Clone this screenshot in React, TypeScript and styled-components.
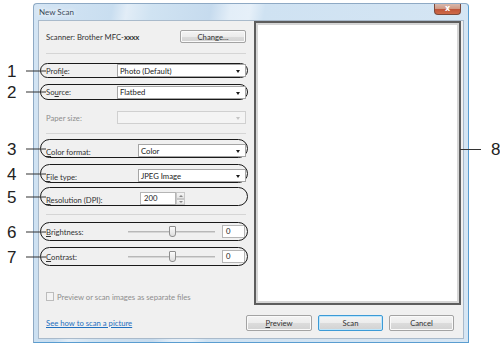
import React from 'react';
import styled, { createGlobalStyle } from 'styled-components';

const Global = createGlobalStyle`
  html, body { margin: 0; padding: 0; background: #fff; }
  body { font-family: Lato, "Open Sans", sans-serif; }
  * { box-sizing: border-box; }
`;

const Stage = styled.div`
  position: relative;
  width: 500px;
  height: 346px;
  padding: 3px 0 0 33px;
  overflow: hidden;
  background: #fff;
`;

const Window = styled.div`
  width: 436px;
  height: 340px;
  border: 1px solid #8ea9c4;
  border-right-color: #5a9dd0;
  border-bottom-color: #5a9dd0;
  border-radius: 4px 4px 0 0;
  background: linear-gradient(100deg, #d4e5f4 0%, #c9def0 16%, #e2edf7 19%, #d0e3f2 24%, #c6dbee 36%, #e3eef8 40%, #e6f0f9 44%, #cfe2f2 47%, #d6e6f4 100%);
  display: flex;
  flex-direction: column;
  padding: 0 4px 3px 4px;
`;

const TitleBar = styled.div`
  height: 16px;
  display: flex;
  align-items: flex-start;
  padding-left: 1px;
`;

const Title = styled.span`
  font-size: 8px;
  line-height: 16px;
  color: #3a4a5a;
  text-shadow: 0 0 4px #fff, 0 0 6px #fff;
`;

const CloseBtn = styled.div`
  margin-left: auto;
  margin-right: 3px;
  width: 27px;
  height: 11px;
  border: 1px solid #7b4a3c;
  border-top: none;
  border-radius: 0 0 4px 4px;
  background: linear-gradient(#d9b8ac 0%, #d09a86 45%, #c0563a 55%, #cf6a48 100%);
  color: #fff;
  font-size: 8px;
  font-weight: 700;
  line-height: 10px;
  text-align: center;
  font-family: "DejaVu Sans", sans-serif;
`;

const Panel = styled.div`
  flex: 1;
  border: 1px solid #a9bacb;
  background: #f0f0f0;
  display: flex;
  flex-direction: column;
`;

const Main = styled.div`
  display: flex;
  height: 284px;
  gap: 8px;
`;

const LeftCol = styled.div`
  width: 207px;
  padding-left: 7px;
  display: flex;
  flex-direction: column;
  font-size: 7.7px;
  color: #333;
`;

const Row = styled.div<{ $mt: number; $h: number; $end?: boolean }>`
  position: relative;
  margin-top: ${(p) => p.$mt}px;
  height: ${(p) => p.$h}px;
  display: flex;
  align-items: ${(p) => (p.$end ? 'flex-end' : 'center')};
  flex-shrink: 0;
`;

const Oval = styled.div`
  position: absolute;
  left: -6px;
  right: -2px;
  top: -1px;
  bottom: -1px;
  border: 1.5px solid #1a1a1a;
  border-radius: 10px;
  pointer-events: none;
`;

const Callout = styled.div`
  position: absolute;
  top: 50%;
  right: 100%;
  display: flex;
  align-items: center;
  transform: translateY(-50%);
`;

const CalloutNum = styled.span`
  font-family: "Liberation Sans", Arial, sans-serif;
  font-size: 17px;
  line-height: 17px;
  color: #222;
  width: 12px;
`;

const CalloutLine = styled.span<{ $w: number }>`
  display: block;
  width: ${(p) => p.$w}px;
  height: 1px;
  background: #333;
  margin-left: 7px;
`;

const Label = styled.span<{ $w?: number; $dim?: boolean; $low?: boolean }>`
  display: inline-block;
  width: ${(p) => (p.$w ? `${p.$w}px` : 'auto')};
  flex-shrink: 0;
  color: ${(p) => (p.$dim ? '#8e8e8e' : '#333')};
  line-height: 12px;
  white-space: nowrap;
  ${(p) => (p.$low ? 'margin-bottom: -1px;' : '')}
`;

const Sep = styled.div<{ $mt: number }>`
  margin-top: ${(p) => p.$mt}px;
  height: 1px;
  width: 200px;
  background: #d5d5d5;
  flex-shrink: 0;
`;

const Select = styled.div<{ $w: number; $disabled?: boolean }>`
  width: ${(p) => p.$w}px;
  height: 13px;
  border: 1px solid ${(p) => (p.$disabled ? '#d0d0d0' : '#a5a5a5')};
  background: ${(p) => (p.$disabled ? '#f4f4f4' : '#fff')};
  display: flex;
  align-items: center;
  padding-left: 2px;
  font-size: 7.7px;
  color: #222;
  position: relative;
`;

const Arrow = styled.span<{ $disabled?: boolean }>`
  position: absolute;
  right: 5px;
  top: 5px;
  width: 0;
  height: 0;
  border-left: 2.5px solid transparent;
  border-right: 2.5px solid transparent;
  border-top: 3px solid ${(p) => (p.$disabled ? '#c4c4c4' : '#1a1a1a')};
`;

const TextBox = styled.div<{ $w: number; $ml?: number }>`
  width: ${(p) => p.$w}px;
  height: 13px;
  margin-left: ${(p) => p.$ml ?? 0}px;
  border: 1px solid #b5b5b5;
  background: #fff;
  font-size: 7.7px;
  line-height: 11px;
  padding-left: 3px;
  color: #222;
`;

const Spin = styled.div`
  width: 9px;
  height: 13px;
  display: flex;
  flex-direction: column;
`;

const SpinBtn = styled.div<{ $up?: boolean }>`
  flex: 1;
  border: 1px solid #c8c8c8;
  background: linear-gradient(#f6f6f6, #e4e4e4);
  position: relative;
  &::after {
    content: '';
    position: absolute;
    left: 2px;
    top: 1.5px;
    border-left: 2px solid transparent;
    border-right: 2px solid transparent;
    ${(p) => (p.$up ? 'border-bottom: 2px solid #888;' : 'border-top: 2px solid #888;')}
  }
`;

const Slider = styled.div`
  position: relative;
  width: 87px;
  height: 12px;
  display: flex;
  align-items: center;
`;

const Track = styled.div`
  width: 100%;
  height: 2px;
  background: #d6d6d6;
  border-top: 1px solid #b8b8b8;
`;

const Thumb = styled.div`
  position: absolute;
  left: 41px;
  top: 0;
  width: 7px;
  height: 11px;
  border: 1px solid #8f8f8f;
  border-radius: 1px 1px 3px 3px;
  background: linear-gradient(#fbfbfb, #dedede);
`;

const Button = styled.div<{ $w: number; $h: number; $def?: boolean }>`
  width: ${(p) => p.$w}px;
  height: ${(p) => p.$h}px;
  border: 1px solid ${(p) => (p.$def ? '#3c9ad6' : '#a3a3a3')};
  border-radius: 2px;
  background: linear-gradient(#f4f4f4 0%, #ececec 50%, #dcdcdc 51%, #d2d2d2 100%);
  box-shadow: inset 0 0 0 1px ${(p) => (p.$def ? '#bfe6fb' : '#fafafa')};
  display: flex;
  align-items: center;
  justify-content: center;
  font-size: 7.7px;
  color: #333;
  flex-shrink: 0;
`;

const Key = styled.span`
  text-decoration: underline;
`;

const Bold = styled.span`
  font-weight: 700;
  letter-spacing: -0.2px;
`;

const Check = styled.div`
  width: 8px;
  height: 9px;
  border: 1px solid #bcbcbc;
  background: #f3f3f3;
  margin-right: 3px;
`;

const Preview = styled.div`
  width: 207px;
  height: 284px;
  border: 2px solid #5d5d5d;
  background: #fff;
  box-shadow: inset 0 0 0 2px #d6d6d6;
`;

const Footer = styled.div`
  display: flex;
  align-items: center;
  margin-top: 10px;
  padding-left: 7px;
  padding-right: 9px;
  height: 15px;
  font-size: 7.7px;
`;

const Link = styled.span`
  color: #1f6fbf;
  text-decoration: underline;
`;

const Buttons = styled.div`
  margin-left: auto;
  display: flex;
  gap: 6px;
`;

const RightCallout = styled.div`
  position: absolute;
  left: 460px;
  top: 141px;
  display: flex;
  align-items: center;
`;

const RightLine = styled.span`
  display: block;
  width: 21px;
  height: 1px;
  background: #333;
  margin-right: 10px;
`;

function Num({ n }: { n: number }) {
  return (
    <Callout>
      <CalloutNum>{n}</CalloutNum>
      <CalloutLine $w={20} />
    </Callout>
  );
}

export default function App() {
  return (
    <Stage>
      <Global />
      <Window>
        <TitleBar>
          <Title>New Scan</Title>
          <CloseBtn>x</CloseBtn>
        </TitleBar>
        <Panel>
          <Main>
            <LeftCol>
              <Row $mt={9} $h={13}>
                <Label $w={134}>
                  Scanner: Brother MFC-<Bold>xxxx</Bold>
                </Label>
                <Button $w={66} $h={13}>
                  Chan<Key>g</Key>e...
                </Button>
              </Row>
              <Sep $mt={10} />
              <Row $mt={10} $h={13}>
                <Oval />
                <Num n={1} />
                <Label $w={71}>Profi<Key>l</Key>e:</Label>
                <Select $w={129}>
                  Photo (Default)
                  <Arrow />
                </Select>
              </Row>
              <Row $mt={8} $h={14}>
                <Oval />
                <Num n={2} />
                <Label $w={71}>So<Key>u</Key>rce:</Label>
                <Select $w={129}>
                  Flatbed
                  <Arrow />
                </Select>
              </Row>
              <Row $mt={12} $h={13}>
                <Label $w={71} $dim>Paper size:</Label>
                <Select $w={129} $disabled>
                  <Arrow $disabled />
                </Select>
              </Row>
              <Sep $mt={9} />
              <Row $mt={6} $h={17} $end>
                <Oval />
                <Num n={3} />
                <Label $w={92} $low><Key>C</Key>olor format:</Label>
                <Select $w={108}>
                  Color
                  <Arrow />
                </Select>
              </Row>
              <Row $mt={8} $h={17} $end>
                <Oval />
                <Num n={4} />
                <Label $w={92} $low><Key>F</Key>ile type:</Label>
                <Select $w={108}>
                  JPEG Image
                  <Arrow />
                </Select>
              </Row>
              <Row $mt={6} $h={17} $end>
                <Oval />
                <Num n={5} />
                <Label $w={94} $low><Key>R</Key>esolution (DPI):</Label>
                <TextBox $w={36}>200</TextBox>
                <Spin>
                  <SpinBtn $up />
                  <SpinBtn />
                </Spin>
              </Row>
              <Sep $mt={9} />
              <Row $mt={8} $h={17}>
                <Oval />
                <Num n={6} />
                <Label $w={82}><Key>B</Key>rightness:</Label>
                <Slider>
                  <Track />
                  <Thumb />
                </Slider>
                <TextBox $w={23} $ml={7}>0</TextBox>
              </Row>
              <Row $mt={8} $h={17}>
                <Oval />
                <Num n={7} />
                <Label $w={82}><Key>C</Key>ontrast:</Label>
                <Slider>
                  <Track />
                  <Thumb />
                </Slider>
                <TextBox $w={23} $ml={7}>0</TextBox>
              </Row>
              <Row $mt={27} $h={9}>
                <Check />
                <Label $dim>Preview or scan images as separate files</Label>
              </Row>
            </LeftCol>
            <Preview />
          </Main>
          <Footer>
            <Link>See how to scan a picture</Link>
            <Buttons>
              <Button $w={66} $h={16}>
                <Key>P</Key>review
              </Button>
              <Button $w={65} $h={16} $def>
                Scan
              </Button>
              <Button $w={65} $h={16}>
                Cancel
              </Button>
            </Buttons>
          </Footer>
        </Panel>
      </Window>
      <RightCallout>
        <RightLine />
        <CalloutNum>8</CalloutNum>
      </RightCallout>
    </Stage>
  );
}
